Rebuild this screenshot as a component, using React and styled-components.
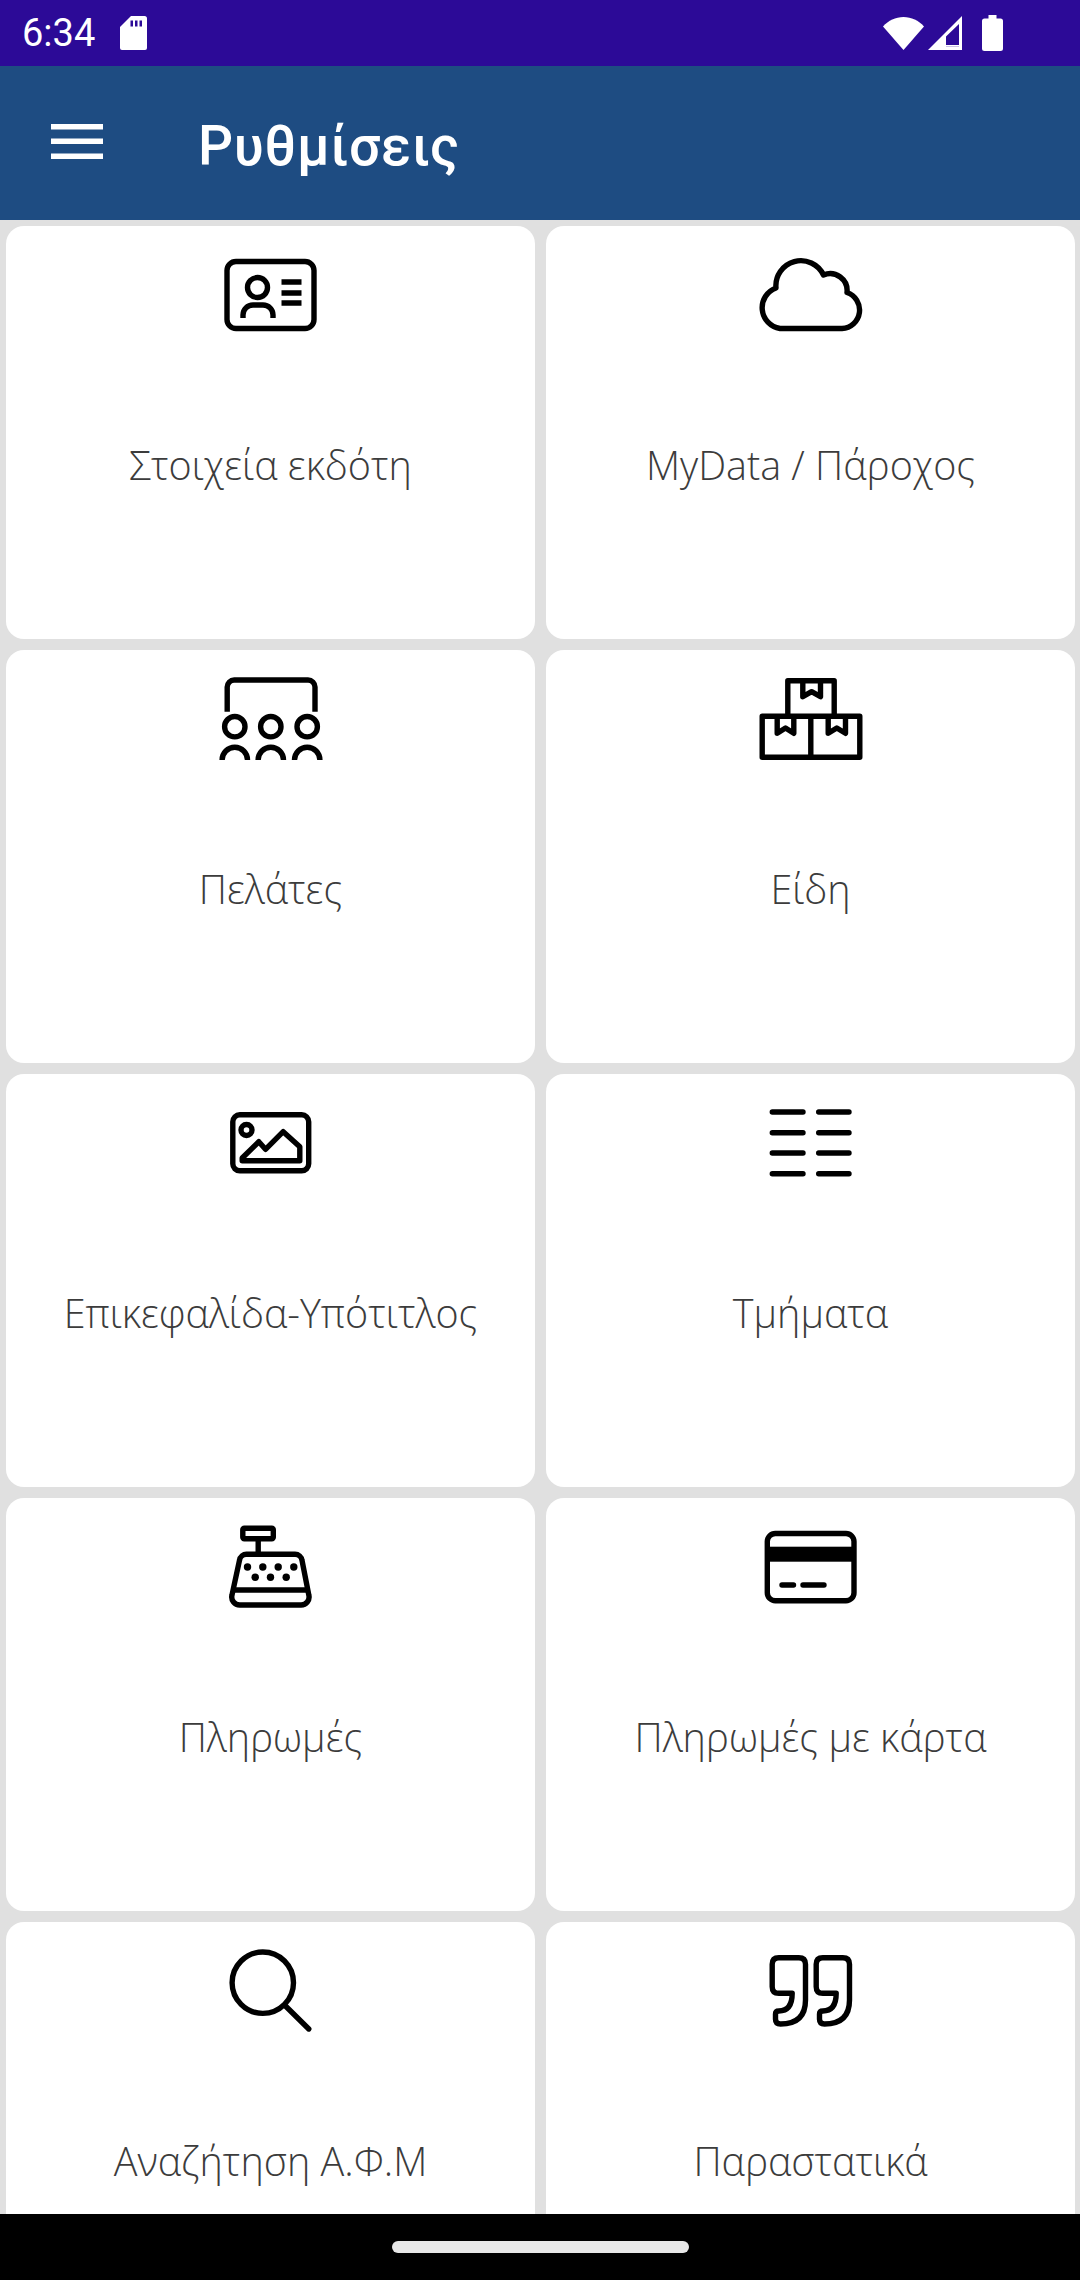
import React from 'react';
import styled, { createGlobalStyle } from 'styled-components';

const GlobalStyle = createGlobalStyle`
  html, body {
    margin: 0;
    padding: 0;
    background: #e0e0e0;
  }
`;

const Screen = styled.div`
  width: 1080px;
  height: 2280px;
  display: flex;
  flex-direction: column;
  overflow: hidden;
  background: #e0e0e0;
`;

const StatusBar = styled.div`
  height: 66px;
  flex: none;
  display: flex;
  align-items: center;
  padding: 0 77px 0 22px;
  background: #2c0a97;
  color: #fff;
`;

const Clock = styled.span`
  font-family: Roboto, sans-serif;
  font-size: 38px;
  width: 98px;
`;

const StatusRight = styled.div`
  margin-left: auto;
  display: flex;
  align-items: center;
  gap: 4px;
`;

const BatteryIcon = styled.svg`
  margin-left: 16px;
`;

const Toolbar = styled.header`
  height: 154px;
  flex: none;
  display: flex;
  align-items: center;
  padding-left: 51px;
  background: #1e4c82;
  color: #fff;
`;

const MenuIcon = styled.svg`
  flex: none;
  margin-right: 95px;
  margin-top: -3px;
`;

const Title = styled.h1`
  margin: 6px 0 0;
  font-family: Roboto, sans-serif;
  font-weight: 500;
  font-size: 55px;
  letter-spacing: 0.6px;
`;

const Content = styled.main`
  flex: 1;
  min-height: 0;
  overflow: hidden;
  display: grid;
  grid-template-columns: 1fr 1fr;
  grid-auto-rows: 412.5px;
  column-gap: 11px;
  row-gap: 11.5px;
  padding: 6px 5px 0 6px;
`;

const Card = styled.div`
  display: flex;
  flex-direction: column;
  align-items: center;
  padding-top: 19px;
  background: #fff;
  border-radius: 18px;
`;

const Icon = styled.svg`
  flex: none;
  fill: none;
  stroke: #000;
  stroke-width: 5.4;
  stroke-linejoin: round;
`;

const Label = styled.span`
  margin-top: 92px;
  font-family: 'Open Sans', sans-serif;
  font-weight: 350;
  font-size: 39.5px;
  line-height: 56px;
  color: #3c3c3c;
`;

const NavBar = styled.div`
  height: 66px;
  flex: none;
  display: flex;
  justify-content: center;
  padding-top: 27px;
  box-sizing: border-box;
  background: #000;
`;

const HomePill = styled.div`
  width: 297px;
  height: 12px;
  border-radius: 6px;
  background: #e8e8e8;
`;

const IdIcon = () => (
  <>
    <rect x="16" y="16.5" width="87" height="67" rx="9" />
    <circle cx="46.5" cy="42.5" r="10" />
    <path d="M32 73v-3a10 10 0 0 1 10-10h10a10 10 0 0 1 10 10v3" />
    <path d="M70.5 37h20M70.5 48h20M70.5 58h20" />
  </>
);

const CloudIcon = () => (
  <path
    transform="translate(-2 0)"
    d="M31 83.5H93A18.5 18.5 0 0 0 98 47.5 17 17 0 0 0 74.5 30 25 25 0 0 0 27 43 21 21 0 0 0 31 83.5Z"
  />
);

const ClientsIcon = () => (
  <>
    <path d="M16.2 42.7V18a7 7 0 0 1 7-7H97a7 7 0 0 1 7 7V42.7" />
    <circle cx="23.8" cy="57.7" r="10.2" />
    <circle cx="59.8" cy="57.7" r="10.2" />
    <circle cx="96.2" cy="57.7" r="10.2" />
    <path d="M11.1 91A12.7 12.7 0 0 1 36.5 91M47.1 91A12.7 12.7 0 0 1 72.5 91M83.5 91A12.7 12.7 0 0 1 108.9 91" />
  </>
);

const BoxesIcon = () => (
  <>
    <path d="M36.8 47.3V11.7H83.2V47.3" />
    <rect x="11.2" y="47.3" width="97.6" height="41" />
    <path d="M59.8 47.3V88.3" />
    <path d="M51.8 11.7V27.7L60.6 22.7 69.5 27.7V11.7" />
    <path d="M26.2 47.3V64.3L34.5 59 42.8 64.3V47.3" />
    <path d="M77.2 47.3V64.3L85.8 59 94.5 64.3V47.3" />
  </>
);

const ImageIcon = () => (
  <>
    <rect x="21.8" y="21.8" width="75.9" height="56" rx="7" />
    <circle cx="35.5" cy="37" r="5.5" />
    <path d="M31.2 67.7V65L47.8 48.7 54.5 56.3 72.2 38.7 88.8 53.7V67.7Z" />
  </>
);

const SectionsIcon = () => (
  <path
    strokeLinecap="round"
    d="M21.3 19H52M21.3 39.7H52M21.3 60H52M21.3 80.7H52M67.7 19H98M67.7 39.7H98M67.7 60H98M67.7 80.7H98"
  />
);

const RegisterIcon = () => (
  <>
    <rect x="31.8" y="11.3" width="30.5" height="10.4" rx="1.5" />
    <path d="M47.2 21.7V37" />
    <path d="M36 37.3H84a7 7 0 0 1 7 6L97.8 78a8 8 0 0 1-8 10H29a8 8 0 0 1-8-10L28.5 43.3a7 7 0 0 1 7.5-6Z" />
    <path d="M21 73H98" />
    <g fill="#000" stroke="none">
      <circle cx="36.5" cy="50" r="3.7" />
      <circle cx="51.8" cy="50" r="3.7" />
      <circle cx="67.2" cy="50" r="3.7" />
      <circle cx="82.8" cy="50" r="3.7" />
      <circle cx="44.2" cy="60.3" r="3.7" />
      <circle cx="59.5" cy="60.3" r="3.7" />
      <circle cx="75.2" cy="60.3" r="3.7" />
    </g>
  </>
);

const CreditCardIcon = () => (
  <>
    <rect x="16.3" y="16.5" width="86.7" height="67.3" rx="8" />
    <rect x="16.3" y="29.7" width="86.7" height="15" fill="#000" stroke="none" />
    <path strokeLinecap="round" d="M31 68H42.5M52 68H73" />
  </>
);

const SearchIcon = () => (
  <>
    <circle cx="51.8" cy="41.7" r="30.7" />
    <path strokeLinecap="round" d="M74 64.5L97.8 88" />
  </>
);

const quotePath =
  'M27.8 16.7H47.8Q54.5 16.7 54.5 23.3V59Q54.5 83 29.5 83 24.5 83 24.5 78.3V73Q24.5 70 27.8 70 41.2 70 41.2 52.3H27.8Q21.2 52.3 21.2 45.7V23.3Q21.2 16.7 27.8 16.7Z';

const QuotesIcon = () => (
  <>
    <path d={quotePath} />
    <path d={quotePath} transform="translate(44 0)" />
  </>
);

const items = [
  { label: 'Στοιχεία εκδότη', Glyph: IdIcon },
  { label: 'MyData / Πάροχος', Glyph: CloudIcon },
  { label: 'Πελάτες', Glyph: ClientsIcon },
  { label: 'Είδη', Glyph: BoxesIcon },
  { label: 'Επικεφαλίδα-Υπότιτλος', Glyph: ImageIcon },
  { label: 'Τμήματα', Glyph: SectionsIcon },
  { label: 'Πληρωμές', Glyph: RegisterIcon },
  { label: 'Πληρωμές με κάρτα', Glyph: CreditCardIcon },
  { label: 'Αναζήτηση Α.Φ.Μ', Glyph: SearchIcon },
  { label: 'Παραστατικά', Glyph: QuotesIcon },
];

const App = () => {
  return (
    <Screen>
      <GlobalStyle />
      <StatusBar>
        <Clock>6:34</Clock>
        <svg width="27" height="34" viewBox="0 0 27 34" fill="#fff">
          <path d="M11 0H24.5A2.5 2.5 0 0 1 27 2.5V32A2 2 0 0 1 25 34H2A2 2 0 0 1 0 32V11Z" />
          <path d="M10.5 4.5h2.5v6h-2.5zM15 4.5h2.5v6H15zM19.5 4.5H22v6h-2.5z" fill="#2c0a97" />
        </svg>
        <StatusRight>
          <svg width="41" height="33" viewBox="0 0 41 33" fill="#fff">
            <path d="M0 9.5C5.500 3.500 12.500 0 20.500 0S35.500 3.500 41 9.500L20.500 33Z" />
          </svg>
          <svg width="34" height="34" viewBox="0 0 34 34" fill="#fff">
            <path fillRule="evenodd" d="M34 0V34H0ZM31 30.500V8L18 20.500V30.500Z" />
            <path d="M18 30.500H31V29H18Z" />
          </svg>
          <BatteryIcon width="21" height="36" viewBox="0 0 21 36" fill="#fff">
            <path d="M6.500 0H14.500V3.500H18.500A2.500 2.500 0 0 1 21 6V33.500A2.500 2.500 0 0 1 18.500 36H2.500A2.500 2.500 0 0 1 0 33.500V6A2.500 2.500 0 0 1 2.500 3.500H6.500Z" />
          </BatteryIcon>
        </StatusRight>
      </StatusBar>
      <Toolbar>
        <MenuIcon width="52" height="35" viewBox="0 0 52 35" fill="#fff">
          <path d="M0 0H52V5.500H0ZM0 14.500H52V20H0ZM0 29.500H52V35H0Z" />
        </MenuIcon>
        <Title>Ρυθμίσεις</Title>
      </Toolbar>
      <Content>
        {items.map(({ label, Glyph }) => (
          <Card key={label}>
            <Icon width="120" height="100" viewBox="0 0 120 100">
              <Glyph />
            </Icon>
            <Label>{label}</Label>
          </Card>
        ))}
      </Content>
      <NavBar>
        <HomePill />
      </NavBar>
    </Screen>
  );
};

export default App;
